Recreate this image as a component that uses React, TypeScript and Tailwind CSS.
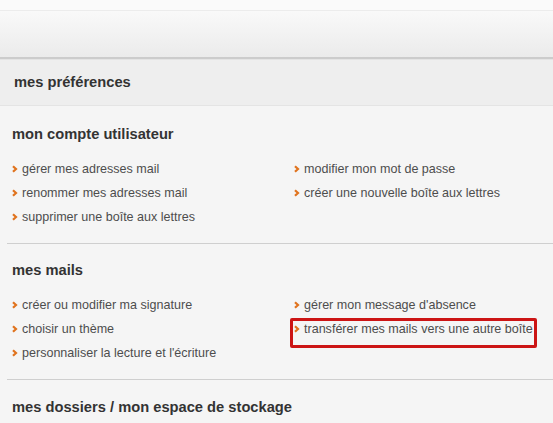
import React from "react";

function Arrow() {
  return (
    <svg width="6" height="8" viewBox="0 0 6 8" className="shrink-0 mr-[4px] -mt-[1px]">
      <polyline points="1,1.2 4,4 1,6.8" fill="none" stroke="#e0731e" strokeWidth="2.2" strokeLinejoin="miter" />
    </svg>
  );
}

function Item({ text, boxed }: { text: string; boxed?: boolean }) {
  return (
    <div className="relative h-[24px] flex items-center text-[12.55px] text-[#4d4d4d]">
      <Arrow />
      <span>{text}</span>
      {boxed && (
        <div className="absolute left-[-4px] top-[1px] w-[247px] h-[30px] border-[3px] border-[#cc1515] rounded-[2px]" />
      )}
    </div>
  );
}

function Section({
  title,
  left,
  right,
  boxedRight,
  first,
  last,
}: {
  title: string;
  left: string[];
  right: string[];
  boxedRight?: number;
  first?: boolean;
  last?: boolean;
}) {
  const pad = last
    ? "pt-[19px]"
    : first
    ? "pt-[20px] pb-[14px] border-b border-[#cfcfcf]"
    : "pt-[18px] pb-[14px] border-b border-[#cfcfcf]";
  return (
    <div className={`ml-[7px] pl-[5px] ${pad}`}>
      <div className="text-[14.7px] leading-[16px] font-bold text-[#333333]">{title}</div>
      {left.length > 0 && (
        <div className="mt-[15px] grid grid-cols-[282px_1fr]">
          <div className="flex flex-col">
            {left.map((t) => (
              <Item key={t} text={t} />
            ))}
          </div>
          <div className="flex flex-col">
            {right.map((t, i) => (
              <Item key={t} text={t} boxed={boxedRight === i} />
            ))}
          </div>
        </div>
      )}
    </div>
  );
}

export default function App() {
  return (
    <div
      className="w-[553px] h-[423px] overflow-hidden bg-[#f5f5f5]"
      style={{ fontFamily: '"Liberation Sans", Arial, sans-serif' }}
    >
      <div className="h-[11px] bg-[#fafafa] border-b border-[#ececec]" />
      <div className="h-[48px] bg-gradient-to-b from-[#f9f9f9] to-[#ebebeb] border-b-2 border-[#cccccc]" />
      <div className="h-[47px] bg-[#eeeeee] border-t border-[#e4e4e4] border-b border-[#cccccc] flex items-center pl-[14px] text-[14.7px] font-bold text-[#333333]">
        mes préférences
      </div>
      <Section
        first
        title="mon compte utilisateur"
        left={["gérer mes adresses mail", "renommer mes adresses mail", "supprimer une boîte aux lettres"]}
        right={["modifier mon mot de passe", "créer une nouvelle boîte aux lettres"]}
      />
      <Section
        title="mes mails"
        left={["créer ou modifier ma signature", "choisir un thème", "personnaliser la lecture et l'écriture"]}
        right={["gérer mon message d'absence", "transférer mes mails vers une autre boîte"]}
        boxedRight={1}
      />
      <Section title="mes dossiers / mon espace de stockage" left={[]} right={[]} last />
    </div>
  );
}
